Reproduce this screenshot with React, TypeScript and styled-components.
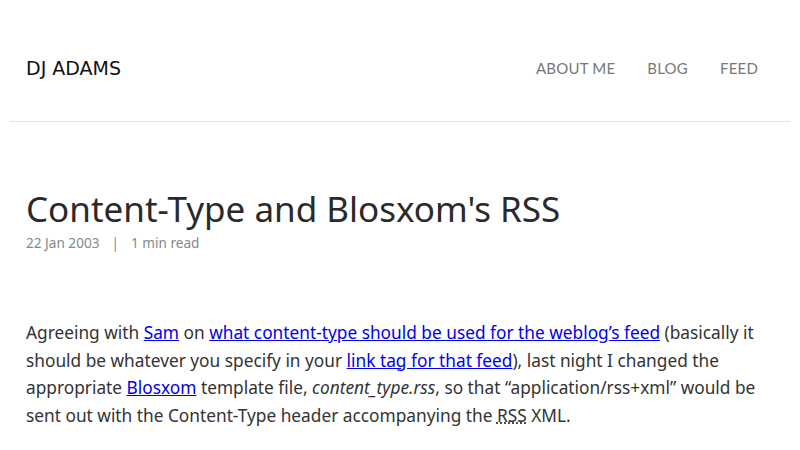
import styled, { createGlobalStyle } from "styled-components";

const Global = createGlobalStyle`
  body {
    margin: 0;
    background: #fff;
    font-family: "Noto Sans", sans-serif;
  }
`;

const Page = styled.div`
  padding: 0 10px;
`;

const Header = styled.header`
  height: 122px;
  display: flex;
  justify-content: space-between;
  align-items: center;
  padding: 15px 32px 0 16px;
  border-bottom: 1px solid #e5e5e5;
  box-sizing: border-box;
`;

const SiteTitle = styled.a`
  font-family: "DejaVu Sans", sans-serif;
  font-size: 19px;
  color: #111;
  text-decoration: none;
`;

const Nav = styled.nav`
  display: flex;
  gap: 32px;
`;

const NavLink = styled.a`
  font-family: "Lato", sans-serif;
  font-size: 15px;
  color: #777;
  text-decoration: none;
  letter-spacing: 0.2px;
`;

const Main = styled.main`
  padding: 63px 16px 0;
`;

const Title = styled.h1`
  margin: 0;
  font-weight: 400;
  font-size: 35px;
  line-height: 48px;
  color: #2a2a2a;
`;

const Meta = styled.div`
  font-size: 13.6px;
  line-height: 20px;
  color: #888;
  display: flex;
  gap: 12px;
`;

const Body = styled.p`
  margin: 66px 0 0;
  font-size: 17.3px;
  line-height: 27.6px;
  color: #333;
  a {
    color: #0000ee;
  }
  abbr {
    text-decoration: underline dotted;
  }
`;

export default function App() {
  return (
    <Page>
      <Global />
      <Header>
        <SiteTitle href="#">DJ ADAMS</SiteTitle>
        <Nav>
          <NavLink href="#">ABOUT ME</NavLink>
          <NavLink href="#">BLOG</NavLink>
          <NavLink href="#">FEED</NavLink>
        </Nav>
      </Header>
      <Main>
        <Title>Content-Type and Blosxom's RSS</Title>
        <Meta>
          <span>22 Jan 2003</span>
          <span>|</span>
          <span>1 min read</span>
        </Meta>
        <Body>
          Agreeing with <a href="#">Sam</a> on{" "}
          <a href="#">what content-type should be used for the weblog’s feed</a>{" "}
          (basically it should be whatever you specify in your{" "}
          <a href="#">link tag for that feed</a>), last night I changed the
          appropriate <a href="#">Blosxom</a> template file,{" "}
          <em>content_type.rss</em>, so that “application/rss+xml” would be
          sent out with the Content-Type header accompanying the{" "}
          <abbr title="Really Simple Syndication">RSS</abbr> XML.
        </Body>
      </Main>
    </Page>
  );
}
